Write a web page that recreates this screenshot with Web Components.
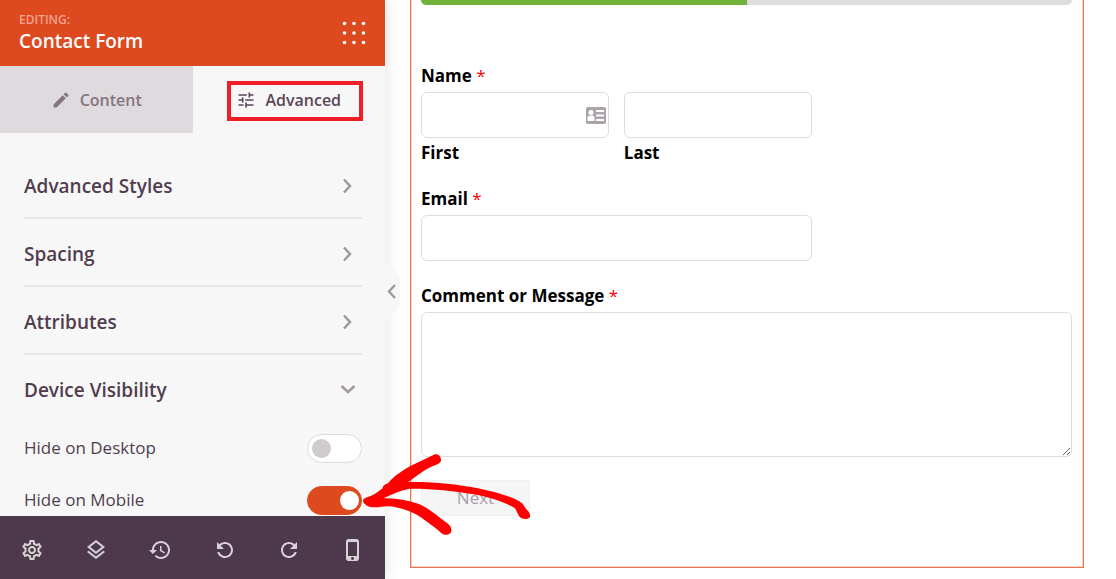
<!DOCTYPE html>
<html lang="en">
<head>
<meta charset="utf-8">
<meta name="viewport" content="width=device-width, initial-scale=1">
<title>Contact Form</title>
<style>
  html, body { margin: 0; height: 100%; }
  body { font-family: "Open Sans", "Noto Sans", sans-serif; color: #513d4f; background: #fff; overflow: hidden; }
</style>
</head>
<body>
<builder-app>
  <builder-sidebar slot="sidebar">
    <panel-header slot="header" kicker="EDITING:">Contact Form</panel-header>
    <panel-tab slot="tabs" icon="edit">Content</panel-tab>
    <panel-tab slot="tabs" icon="tune" active marked>Advanced</panel-tab>
    <panel-section>Advanced Styles</panel-section>
    <panel-section>Spacing</panel-section>
    <panel-section>Attributes</panel-section>
    <panel-section open>Device Visibility
      <toggle-row slot="content" label="Hide on Desktop"></toggle-row>
      <toggle-row slot="content" label="Hide on Mobile" checked></toggle-row>
    </panel-section>
    <tool-bar slot="footer"></tool-bar>
  </builder-sidebar>
  <form-preview>
    <progress-track value="50"></progress-track>
    <name-field></name-field>
    <form-field class="narrow" label="Email"></form-field>
    <form-field label="Comment or Message" multiline></form-field>
    <next-button>Next</next-button>
  </form-preview>
  <pointer-arrow slot="overlay"></pointer-arrow>
</builder-app>

<script>
const ICONS = {
  edit: 'M3 17.25V21h3.75L17.81 9.94l-3.75-3.75L3 17.25zM20.71 7.04c.39-.39.39-1.02 0-1.41l-2.34-2.34c-.39-.39-1.02-.39-1.41 0l-1.83 1.83 3.75 3.75 1.83-1.83z',
  tune: 'M3 17v2h6v-2H3zM3 5v2h10V5H3zm10 16v-2h8v-2h-8v-2h-2v6h2zM7 9v2H3v2h4v2h2V9H7zm14 4v-2H11v2h10zm-6-4h2V7h4V5h-4V3h-2v6z',
  settings: 'M19.43 12.98c.04-.32.07-.64.07-.98 0-.34-.03-.66-.07-.98l2.11-1.65c.19-.15.24-.42.12-.64l-2-3.46c-.09-.16-.26-.25-.44-.25-.06 0-.12.01-.17.03l-2.49 1c-.52-.4-1.08-.73-1.69-.98l-.38-2.65C14.46 2.18 14.25 2 14 2h-4c-.25 0-.46.18-.49.42l-.38 2.65c-.61.25-1.17.59-1.69.98l-2.49-1c-.06-.02-.12-.03-.18-.03-.17 0-.34.09-.43.25l-2 3.46c-.13.22-.07.49.12.64l2.11 1.65c-.04.32-.07.65-.07.98 0 .33.03.66.07.98l-2.11 1.65c-.19.15-.24.42-.12.64l2 3.46c.09.16.26.25.44.25.06 0 .12-.01.17-.03l2.49-1c.52.4 1.08.73 1.69.98l.38 2.65c.03.24.24.42.49.42h4c.25 0 .46-.18.49-.42l.38-2.65c.61-.25 1.17-.59 1.69-.98l2.49 1c.06.02.12.03.18.03.17 0 .34-.09.43-.25l2-3.46c.12-.22.07-.49-.12-.64l-2.11-1.65zm-1.98-1.71c.04.31.05.52.05.73 0 .21-.02.43-.05.73l-.14 1.13.89.7 1.08.84-.7 1.21-1.27-.51-1.04-.42-.9.68c-.43.32-.84.56-1.25.73l-1.06.43-.16 1.13-.2 1.35h-1.4l-.19-1.35-.16-1.13-1.06-.43c-.43-.18-.83-.41-1.23-.71l-.91-.7-1.06.43-1.27.51-.7-1.21 1.08-.84.89-.7-.14-1.13c-.03-.31-.05-.54-.05-.74s.02-.43.05-.73l.14-1.13-.89-.7-1.08-.84.7-1.21 1.27.51 1.04.42.9-.68c.43-.32.84-.56 1.25-.73l1.06-.43.16-1.13.2-1.35h1.39l.19 1.35.16 1.13 1.06.43c.43.18.83.41 1.23.71l.91.7 1.06-.43 1.27-.51.7 1.21-1.07.85-.89.7.14 1.13zM12 8c-2.21 0-4 1.79-4 4s1.79 4 4 4 4-1.79 4-4-1.79-4-4-4zm0 6c-1.1 0-2-.9-2-2s.9-2 2-2 2 .9 2 2-.9 2-2 2z',
  layers: 'M11.99 18.54l-7.37-5.73L3 14.07l9 7 9-7-1.63-1.27-7.38 5.74zM12 16l7.36-5.73L21 9l-9-7-9 7 1.63 1.27L12 16zm0-11.47L17.74 9 12 13.47 6.26 9 12 4.53z',
  history: 'M13 3c-4.97 0-9 4.03-9 9H1l3.89 3.89.07.14L9 12H6c0-3.87 3.13-7 7-7s7 3.13 7 7-3.13 7-7 7c-1.93 0-3.68-.79-4.94-2.06l-1.42 1.42C8.27 19.99 10.51 21 13 21c4.97 0 9-4.03 9-9s-4.03-9-9-9zm-1 5v5l4.28 2.54.72-1.21-3.5-2.08V8H12z',
  redo: 'M17.65 6.35C16.2 4.9 14.21 4 12 4c-4.42 0-7.99 3.58-7.99 8s3.57 8 7.99 8c3.73 0 6.84-2.55 7.73-6h-2.08c-.82 2.33-3.04 4-5.65 4-3.31 0-6-2.69-6-6s2.69-6 6-6c1.66 0 3.14.69 4.22 1.78L13 11h7V4l-2.35 2.35z',
  phone: 'M15.5 1h-8C6.12 1 5 2.12 5 3.5v17C5 21.88 6.12 23 7.5 23h8c1.38 0 2.5-1.12 2.5-2.5v-17C18 2.12 16.88 1 15.5 1zm-4 21c-.83 0-1.5-.67-1.5-1.5s.67-1.5 1.5-1.5 1.5.67 1.5 1.5-.67 1.5-1.5 1.5zm4.5-4H7V4h9v14z'
};
const icon = (name, size, flip = false) =>
  `<svg width="${size}" height="${size}" viewBox="0 0 24 24" fill="currentColor" aria-hidden="true"><path ${flip ? 'transform="matrix(-1 0 0 1 24 0)"' : ''} d="${ICONS[name]}"/></svg>`;

const define = (tag, render) => customElements.define(tag, class extends HTMLElement {
  constructor() { super(); this.attachShadow({ mode: 'open' }); }
  connectedCallback() {
    this.shadowRoot.innerHTML = '<style>*{box-sizing:border-box}svg{display:block}</style>' + render(this);
  }
});

define('builder-app', () => `
  <style>
    :host { display: grid; grid-template-columns: 385px minmax(0, 1fr); height: 100vh; position: relative; }
    main { padding: 0 32px 0 25px; overflow: hidden; }
  </style>
  <slot name="sidebar"></slot>
  <main><slot></slot></main>
  <slot name="overlay"></slot>`);

define('builder-sidebar', () => `
  <style>
    :host { display: flex; flex-direction: column; min-height: 0; position: relative; z-index: 1;
      background: #f7f7f7; box-shadow: 0 0 16px rgba(0, 0, 0, .12); }
    nav { display: grid; grid-template-columns: 1fr 1fr; }
    .body { flex: 1; min-height: 0; overflow: hidden; padding: 18px 23px 0 24px; }
    .collapse { position: absolute; left: 100%; top: 50%; width: 16px; height: 72px; margin-top: -35px;
      padding: 0; border: 0; background: none; color: #a198a0; }
  </style>
  <slot name="header"></slot>
  <nav><slot name="tabs"></slot></nav>
  <div class="body"><slot></slot></div>
  <slot name="footer"></slot>
  <button class="collapse" aria-label="Collapse panel">
    <svg width="16" height="72" viewBox="0 0 16 72"><path d="M0 2C0 12 15 13 15 27V45C15 59 0 60 0 70Z" fill="#f7f7f7"/>
    <path d="M10 30L4 36.500L10 43" fill="none" stroke="currentColor" stroke-width="2.400"/></svg>
  </button>`);

define('panel-header', el => `
  <style>
    :host { display: block; background: #dd4a1f; color: #fff; }
    header { display: flex; align-items: center; justify-content: space-between; height: 66px; padding: 0 19px; }
    p { margin: 0; font-size: 12px; line-height: 16px; color: #f1a58f; font-weight: 600; }
    h1 { margin: 0; font-size: 19px; line-height: 26px; font-weight: 600; }
    button { border: 0; padding: 0; background: none; color: inherit; }
  </style>
  <header>
    <div><p>${el.getAttribute('kicker')}</p><h1><slot></slot></h1></div>
    <button aria-label="Menu"><svg width="24" height="24" viewBox="0 0 24 24" fill="currentColor">
      ${[2.5, 12, 21.5].map(y => [2.5, 12, 21.5].map(x => `<circle cx="${x}" cy="${y}" r="1.800"/>`).join('')).join('')}
    </svg></button>
  </header>`);

define('panel-tab', el => `
  <style>
    :host { display: block; position: relative; background: #dfdadd; color: #84757f; }
    :host([active]) { background: #f7f7f7; color: #5a4658; }
    button { display: flex; align-items: center; justify-content: center; gap: 9px; width: 100%; height: 67px;
      border: 0; padding: 0; background: none; color: inherit; font: 600 16px/24px "Open Sans", sans-serif; }
    .mark { position: absolute; inset: 15px 22px 12px 34px; border: 4px solid #f01e26; pointer-events: none; }
  </style>
  <button>${icon(el.getAttribute('icon'), 20)}<span><slot></slot></span></button>
  ${el.hasAttribute('marked') ? '<div class="mark"></div>' : ''}`);

define('panel-section', () => `
  <style>
    :host { display: block; border-bottom: 2px solid #e9e8e9; }
    :host([open]) { border: 0; }
    h2 { margin: 0; }
    button { display: flex; align-items: center; justify-content: space-between; width: 100%; height: 66px;
      border: 0; padding: 4px 0 0; background: none; color: inherit; font: 600 19px/28px "Open Sans", sans-serif; text-align: left; }
    svg { color: #a198a0; }
    :host([open]) svg { transform: rotate(90deg); }
  </style>
  <h2><button><span><slot></slot></span>
    <svg width="28" height="28" viewBox="0 0 28 28"><path d="M10 7.500L16 14L10 20.500" fill="none" stroke="currentColor" stroke-width="2.500"/></svg>
  </button></h2>
  <slot name="content"></slot>`);

define('toggle-row', el => `
  <style>
    :host { display: block; }
    label { display: flex; align-items: center; justify-content: space-between; height: 52px; padding-top: 2px; font-size: 17px; line-height: 24px; }
    input { appearance: none; display: flex; align-items: center; margin: 0; width: 55px; height: 29px; padding: 0 4px;
      border: 1px solid #dcdadc; border-radius: 15px; background: #fff; }
    input::before { content: ""; width: 19px; height: 19px; border-radius: 50%; background: #cfcbce; }
    input:checked { background: #dd4a1f; border-color: #dd4a1f; justify-content: flex-end; padding: 0 2px; }
    input:checked::before { background: #fff; }
  </style>
  <label>${el.getAttribute('label')}<input type="checkbox" ${el.hasAttribute('checked') ? 'checked' : ''}></label>`);

define('tool-bar', () => `
  <style>
    :host { display: block; background: #4d394b; color: #d8d2d7; }
    div { display: grid; grid-template-columns: repeat(6, 1fr); height: 63px; padding-top: 4px; }
    button { display: grid; place-items: center; border: 0; padding: 0; background: none; color: inherit; }
  </style>
  <div role="toolbar">
    <button aria-label="Settings">${icon('settings', 24)}</button>
    <button aria-label="Layers">${icon('layers', 24)}</button>
    <button aria-label="History">${icon('history', 24)}</button>
    <button aria-label="Undo">${icon('redo', 24, true)}</button>
    <button aria-label="Redo">${icon('redo', 24)}</button>
    <button aria-label="Mobile preview">${icon('phone', 24)}</button>
  </div>`);

define('form-preview', () => `
  <style>
    :host { display: block; color: #000; }
    form { display: flex; flex-direction: column; gap: 23px; border: 1px solid #ea7352; border-top: 0;
      padding: 0 11px 51px 10px; box-shadow: inset 0 -1px #f9d3c6, inset 1px 0 #f9d3c6, inset -1px 0 #f9d3c6; }
    ::slotted(.narrow) { width: 60%; }
  </style>
  <form><slot></slot></form>`);

define('progress-track', el => `
  <style>
    :host { display: block; margin-bottom: 36px; }
    div { height: 5px; border-radius: 0 0 9px 9px; background: #ddd; overflow: hidden; }
    i { display: block; height: 100%; width: ${el.getAttribute('value')}%; background: #72b239; }
  </style>
  <div role="progressbar" aria-valuenow="${el.getAttribute('value')}"><i></i></div>`);

const FIELD_CSS = `
  label, legend { display: block; padding: 0; font-size: 17px; line-height: 24px; font-weight: 700; }
  em { font-style: normal; font-weight: 400; color: #f00; }
  input, textarea { display: block; width: 100%; height: 46px; margin: 0; padding: 8px 12px; border: 1px solid #dedede;
    border-radius: 6px; background: #fff; font: 400 17px/24px "Open Sans", sans-serif; }
  textarea { height: 145px; resize: vertical; }`;

define('name-field', () => `
  <style>
    :host { display: block; width: 60%; }
    ${FIELD_CSS}
    fieldset { border: 0; margin: 0; padding: 0; min-width: 0; }
    legend { margin-bottom: 4px; }
    .cols { display: grid; grid-template-columns: 1fr 1fr; gap: 15px; }
    .cell { display: flex; flex-direction: column; gap: 4px; }
    .cell label { line-height: 22px; }
    .box { position: relative; }
    .box svg { position: absolute; right: 3px; top: 14px; }
  </style>
  <fieldset>
    <legend>Name <em>*</em></legend>
    <div class="cols">
      <div class="cell"><div class="box"><input id="first" type="text">
        <svg width="20" height="18" viewBox="0 0 20 18" aria-hidden="true"><rect x="0" y="1" width="20" height="17" rx="2" fill="#aaa3a9"/>
        <circle cx="5" cy="6.500" r="2.500" fill="#fff"/><path d="M1.500 15V12Q1.500 9.500 4 9.500H6Q8.500 9.500 8.500 12V15ZM10 4H18V6H10ZM10 8.500H18V10.500H10ZM10 13H18V15H10Z" fill="#fff"/></svg>
      </div><label for="first">First</label></div>
      <div class="cell"><input id="last" type="text"><label for="last">Last</label></div>
    </div>
  </fieldset>`);

define('form-field', el => `
  <style>
    :host { display: block; }
    ${FIELD_CSS}
    label { margin-bottom: 4px; }
  </style>
  <label for="f">${el.getAttribute('label')} <em>*</em></label>
  ${el.hasAttribute('multiline') ? '<textarea id="f"></textarea>' : '<input id="f" type="email">'}`);

define('next-button', () => `
  <style>
    :host { display: block; }
    button { width: 109px; height: 36px; border: 1px solid #f0f0f0; padding: 0; background: #f5f5f5; color: #a79fa6;
      font: 400 17px/24px "Open Sans", sans-serif; display: block; }
  </style>
  <button type="button"><slot></slot></button>`);

define('pointer-arrow', () => `
  <style>
    :host { position: absolute; left: 340px; top: 440px; z-index: 2; pointer-events: none; }
  </style>
  <svg width="220" height="139" viewBox="0 0 660 417" aria-hidden="true">
    <path fill="#f00" d="M69 182C70 175 80 172 92 168C104 163 118 153 128 145C128 137 136 133 144 130C162 107 194 87 222 73L282 44C294 40 304 49 303 62C300 73 280 76 266 84C244 97 225 111 205 126C270 124 350 132 410 144C460 154 510 168 540 185C552 192 553 202 562 211C569 218 572 226 569 233C558 240 543 237 537 228C531 219 530 211 524 204C490 184 440 170 400 163C340 152 270 145 208 146C180 151 155 163 130 175C165 173 200 180 230 190C265 202 290 227 320 248C334 257 337 270 332 278C324 287 311 286 303 278C285 262 260 245 238 229C215 213 180 203 150 199C130 197 120 203 101 202C84 202 70 192 69 182Z"/>
  </svg>`);
</script>
</body>
</html>
